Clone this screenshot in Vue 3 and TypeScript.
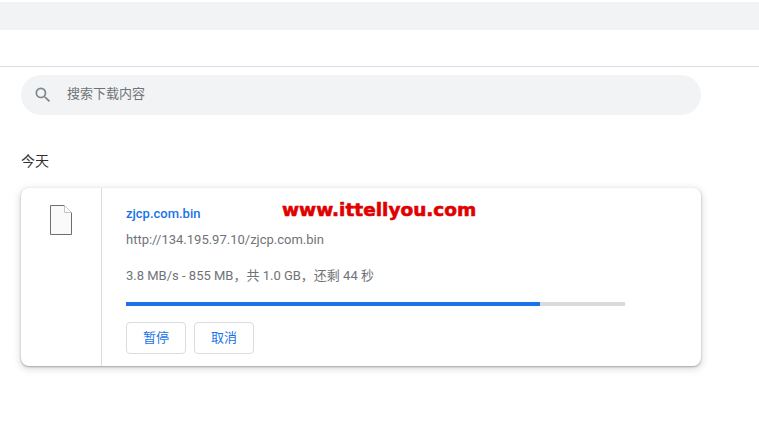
<script setup lang="ts">
const progress = 83
</script>

<template>
  <div class="page">
    <div class="topbar" />
    <div class="header" />
    <div class="content">
      <div class="search">
        <svg class="search-icon" width="20" height="20" viewBox="0 0 24 24">
          <path
            fill="#80868b"
            d="M15.5 14h-.79l-.28-.27A6.47 6.47 0 0 0 16 9.5 6.5 6.5 0 1 0 9.5 16c1.61 0 3.09-.59 4.23-1.57l.27.28v.79l5 4.99L20.49 19l-4.99-5zm-6 0C7.01 14 5 11.99 5 9.5S7.01 5 9.5 5 14 7.01 14 9.5 11.99 14 9.5 14z"
          />
        </svg>
        <span class="search-text">搜索下载内容</span>
      </div>

      <div class="date">今天</div>

      <div class="card">
        <div class="icon-col">
          <svg width="24" height="30" viewBox="0 0 24 30">
            <path d="M1.500 .5h14l7 7v22h-21z" fill="#fafafa" stroke="#6e6e6e" stroke-width="1" />
            <path d="M15.500 .5v7h7z" fill="#fff" stroke="#c4c4c4" stroke-width="1" />
          </svg>
        </div>
        <div class="details">
          <a class="name">zjcp.com.bin</a>
          <div class="url">http://134.195.97.10/zjcp.com.bin</div>
          <div class="status">3.8 MB/s - 855 MB，共 1.0 GB，还剩 44 秒</div>
          <div class="progress">
            <div class="progress-fill" :style="{ width: progress + '%' }" />
          </div>
          <div class="actions">
            <button class="btn">暂停</button>
            <button class="btn">取消</button>
          </div>
        </div>
        <div class="watermark">www.ittellyou.com</div>
      </div>
    </div>
  </div>
</template>

<style scoped>
.page {
  width: 759px;
  height: 422px;
  background: #fff;
  overflow: hidden;
  font-family: Roboto, "Noto Sans CJK SC", sans-serif;
}
.topbar {
  height: 28px;
  margin-top: 2px;
  background: #f1f3f4;
}
.header {
  height: 36px;
  border-bottom: 1px solid #dadce0;
}
.content {
  padding: 8px 0 0 21px;
  width: 680px;
}
.search {
  display: flex;
  align-items: center;
  height: 40px;
  border-radius: 20px;
  background: #f1f3f4;
  padding-left: 12px;
}
.search-icon { flex: 0 0 auto; }
.search-text {
  margin-left: 14px;
  margin-bottom: 2px;
  line-height: 18px;
  font-size: 13px;
  color: #6f7377;
}
.date {
  margin-top: 37px;
  height: 18px;
  line-height: 18px;
  font-size: 14px;
  color: #303134;
}
.card {
  position: relative;
  display: flex;
  height: 178px;
  margin-top: 18px;
  background: #fff;
  border-radius: 8px;
  box-shadow: 0 1px 2px rgba(60, 64, 67, 0.4), 0 2px 6px 2px rgba(60, 64, 67, 0.15);
}
.icon-col {
  flex: 0 0 81px;
  box-sizing: border-box;
  border-right: 1px solid #dadce0;
  padding-top: 17px;
  display: flex;
  justify-content: center;
  align-items: flex-start;
}
.details {
  flex: 1;
  padding: 17px 76px 0 24px;
  font-size: 13px;
  color: #6f7377;
}
.name {
  display: block;
  height: 18px;
  line-height: 18px;
  font-weight: 500;
  color: #1a73e8;
}
.url {
  margin-top: 8px;
  height: 18px;
  line-height: 18px;
}
.status {
  margin-top: 18px;
  height: 18px;
  line-height: 18px;
}
.progress {
  margin-top: 17px;
  height: 4px;
  background: #dadada;
}
.progress-fill {
  height: 100%;
  background: #1a73e8;
}
.actions {
  display: flex;
  gap: 8px;
  margin-top: 16px;
}
.btn {
  width: 60px;
  height: 32px;
  padding: 0 0 3px;
  border: 1px solid #dadce0;
  border-radius: 4px;
  background: #fff;
  color: #1a73e8;
  font-family: inherit;
  font-size: 13px;
  font-weight: 400;
}
.watermark {
  position: absolute;
  left: 261px;
  top: 10px;
  font-family: "DejaVu Sans", sans-serif;
  font-weight: 700;
  font-size: 18.5px;
  line-height: 24px;
  color: #e00000;
  white-space: nowrap;
  -webkit-text-stroke: 0.6px #e00000;
}
</style>
